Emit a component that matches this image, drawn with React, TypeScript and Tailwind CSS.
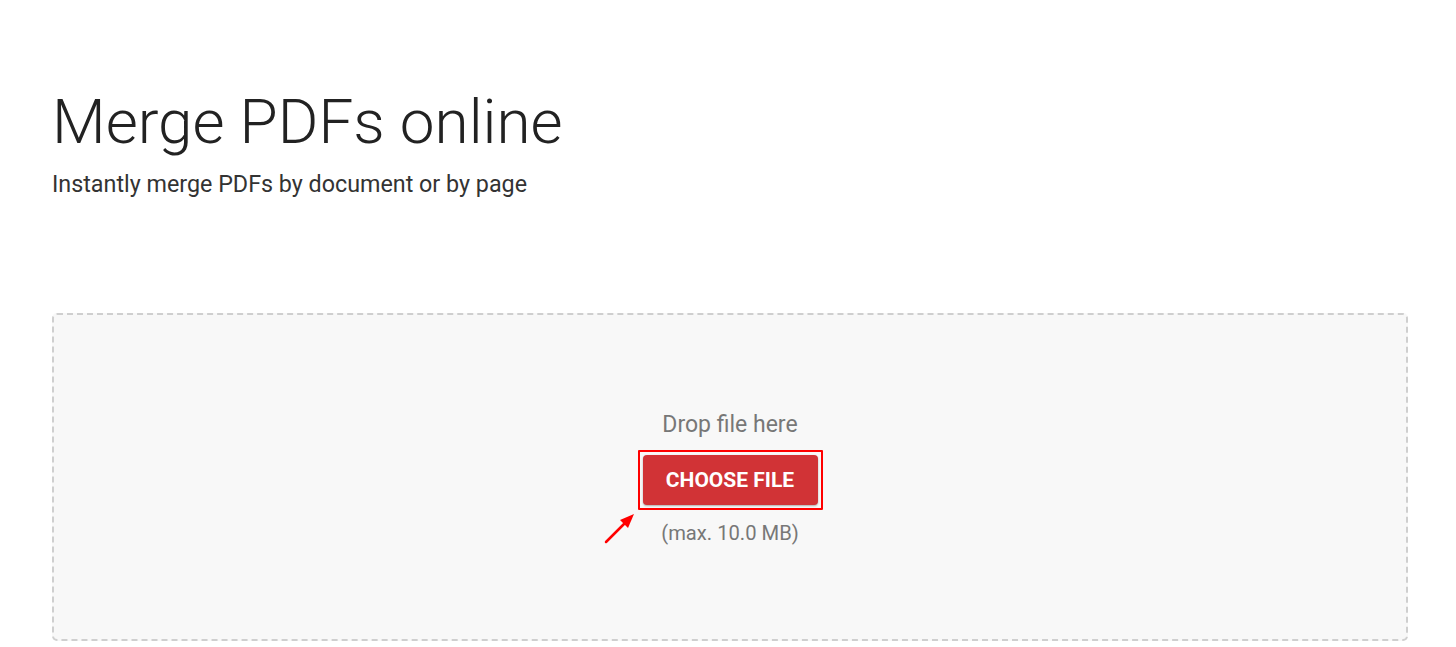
export default function App() {
  return (
    <div className="min-h-[647px] bg-white px-[52px] pt-[82px] font-['Roboto',sans-serif]">
      <h1 className="text-[62px] font-light leading-[80px] text-[#222]">Merge PDFs online</h1>
      <p className="mt-[8px] text-[23.3px] leading-[28px] text-[#333]">Instantly merge PDFs by document or by page</p>

      <div className="mt-[115px] flex h-[328px] w-[1356px] flex-col items-center justify-center rounded-[5px] border-2 border-dashed border-[#cfcfcf] bg-[#f8f8f8]">
        <div className="mt-[2px] text-[23px] leading-[28px] text-[#777]">Drop file here</div>
        <div className="relative mt-[11px]">
          <div className="rounded-[1px] border-2 border-[#ff0000] p-[3px]">
            <button className="h-[50px] w-[175px] rounded-[4px] bg-[#d13336] pt-[1px] text-[21px] font-bold text-white shadow-[0_1px_2px_rgba(0,0,0,0.3)]">
              CHOOSE FILE
            </button>
          </div>
          <svg className="absolute left-[-35px] top-[61px]" width="34" height="34" viewBox="0 0 34 34">
            <line x1="3" y1="31" x2="24" y2="10" stroke="#ff0000" strokeWidth="2.5" strokeLinecap="round" />
            <polygon points="31,3 17,9 25,17" fill="#ff0000" />
          </svg>
        </div>
        <div className="mt-[11px] text-[20.2px] leading-[24px] text-[#777]">(max. 10.0 MB)</div>
      </div>
    </div>
  )
}
